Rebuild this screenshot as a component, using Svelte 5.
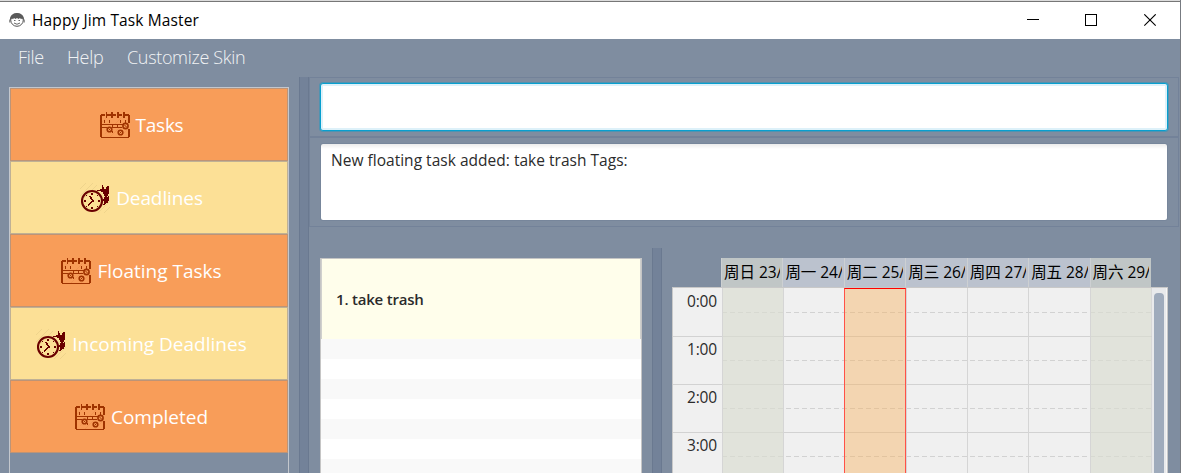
<script>
  const menus = [
    { label: 'File', w: 26 },
    { label: 'Help', w: 37 },
    { label: 'Customize Skin', w: 119 }
  ];
  const categories = [
    { label: 'Tasks', icon: 'calendar', track: -0.25 },
    { label: 'Deadlines', icon: 'clock', track: -0.1 },
    { label: 'Floating Tasks', icon: 'calendar', track: 0 },
    { label: 'Incoming Deadlines', icon: 'clock', track: 0 },
    { label: 'Completed', icon: 'calendar', track: 0 }
  ];
  const days = ['周日 23/', '周一 24/', '周二 25/', '周三 26/', '周四 27/', '周五 28/', '周六 29/'];
  const hours = ['0:00', '1:00', '2:00', '3:00'];
</script>

{#snippet calendar()}
  <svg class="icon" width="30" height="30" viewBox="0 0 30 30">
    <path d="M1 13L12 2M5 24L25 4M9 28L29 8M19 28L29 18" stroke="#ee9250" stroke-width="1" fill="none" opacity=".7" />
    <g fill="#9f3300" shape-rendering="crispEdges">
      <path d="M0 5h2v22H0zM1 4h4v2H1zM1 27h28v1H1zM28 19h2v8h-2zM28 5h2v8h-2zM25 4h4v2h-4z" />
      <path d="M6 2h1v6H6zM7 4h4v2H7zM11 2h2v6h-2zM13 4h3v2h-3zM17 2h2v6h-2zM19 4h3v2h-3zM23 2h2v6h-2z" />
      <path d="M4 10h1v3H4zM9 10h1v3H9zM20 10h1v3h-1zM25 10h1v3h-1zM2 14h21v1H2zM2 17h5v1H2zM12 17h10v1H12zM12 14h1v3h-1zM17 14h1v4h-1zM12 21h1v2h-1z" />
    </g>
    <g fill="none" stroke="#9f3300" stroke-width="1.6">
      <circle cx="9.500" cy="19.500" r="2.300" />
      <circle cx="20.500" cy="22.500" r="2.300" />
      <circle cx="25.500" cy="16" r="2.600" />
      <path d="M8.500 18.500l2 2M19.500 23.500l2-2M24.500 15.500l2 1" stroke-width="1" />
    </g>
  </svg>
{/snippet}

{#snippet clock()}
  <svg class="icon" width="30" height="30" viewBox="0 0 30 30">
    <path d="M0 6L6 0M0 13L13 0M3 16L17 2M18 30L30 18M24 30L30 24" stroke="#efd48c" stroke-width="1" fill="none" />
    <circle cx="12" cy="18" r="10" fill="none" stroke="#690000" stroke-width="2.1" />
    <g shape-rendering="crispEdges">
      <path d="M10 13l3 5-5 4" fill="none" stroke="#690000" stroke-width="1.700" />
      <path fill="#690000" d="M11 10h2v2h-2zM4 17h2v2H4zM18 17h2v2h-2zM11 24h2v2h-2zM6 12h1v1H6zM17 12h1v1h-1zM6 23h1v1H6zM17 23h1v1h-1z" />
      <path fill="#690000" d="M17 7h3v-1h2v-4h1v2h1v2h2v-2h1v-1h2v8h-1v2h-1v1h1v-1h1v5h-1v2h-2v1h-1v1h-2v-1h1v-3h-1v-2h1v-2h1v-1h-1v-2h-1v-2h-2v-1h-4z" />
    </g>
  </svg>
{/snippet}

<div class="window">
  <header class="titlebar">
    <svg class="logo" width="16" height="16" viewBox="0 0 16 16">
      <circle cx="8" cy="8" r="6.3" fill="#fff" stroke="#555" stroke-width="1" />
      <path d="M1 8C.8 4 3.500 1 8 1s7.200 3 7 7l-2-1.500-1 .8-1-1.300-1.500 1L8 6 6.500 7 5 6 4 7.300l-1-.8z" fill="#5a5a5a" />
      <path d="M.8 7.500v3M15.200 7.500v3M5 8.500h1.500M9.500 8.500H11M5 11q3 2.500 6 0" stroke="#666" stroke-width="1" fill="none" />
    </svg>
    <span class="title">Happy Jim Task Master</span>
    <svg class="controls" width="132" height="13" viewBox="0 0 132 13" fill="none" stroke="#000">
      <path d="M0 5.500h12" />
      <rect x="58.500" y=".5" width="11" height="11" />
      <path d="M117.300.3l11.400 11.400M128.700.3L117.300 11.700" stroke-width="1.100" />
    </svg>
  </header>

  <nav class="menubar">
    {#each menus as m}
      <span class="menu" style="width:{m.w}px">{m.label}</span>
    {/each}
  </nav>

  <main class="content">
    <aside class="sidebar">
      {#each categories as c}
        <div class="category" class:alt={c.icon === 'clock'}>
          {#if c.icon === 'clock'}{@render clock()}{:else}{@render calendar()}{/if}
          <span style="letter-spacing:{c.track}px">{c.label}</span>
        </div>
      {/each}
    </aside>
    <div class="divider"></div>
    <section class="right">
      <div class="panel command"><div class="input"></div></div>
      <div class="panel result"><div class="textarea"><span>New floating task added: take trash Tags:</span></div></div>
      <div class="lower">
        <div class="tasklist">
          <div class="task">1. take trash</div>
          <div class="stripes"></div>
        </div>
        <div class="divider"></div>
        <div class="agenda">
          <div class="days">
            {#each days as d, i}
              <div class="day" class:weekend={i === 0 || i === 6}><span>{d}</span></div>
            {/each}
          </div>
          <div class="body">
            <div class="hours">
              {#each hours as h}<div class="hour">{h}</div>{/each}
            </div>
            <div class="grid">
              <svg class="lines" width="430" height="185" viewBox="0 0 430 185" fill="none" stroke="#d2d2d2">
                {#each hours as h, i}
                  <path d="M0 {48 * i + 24.5}H430" stroke-dasharray="5 3" />
                  <path d="M0 {48 * i + 48.5}H430" />
                {/each}
              </svg>
              {#each days as d, i}
                <div class="col" class:weekend={i === 0 || i === 6} class:today={i === 2}></div>
              {/each}
            </div>
            <div class="scroll"><div class="thumb"></div></div>
          </div>
        </div>
      </div>
    </section>
  </main>
</div>

<style>
  :global(body) { overflow: hidden; }
  .window {
    box-sizing: border-box; width: 1181px; height: 473px; overflow: hidden;
    display: flex; flex-direction: column; background: #7f8da0;
    border-right: 1px solid #777b81;
    font-family: "Open Sans", "Noto Sans", "Noto Sans CJK SC", sans-serif;
  }
  .titlebar {
    box-sizing: border-box; height: 39px; flex: none; display: flex; align-items: center;
    background: #fff; border-top: 1px solid #dcdcdc; box-shadow: inset 0 1px #777;
    padding: 0 21px 0 9px;
  }
  .title { margin-left: 7px; font-size: 15.500px; letter-spacing: 0.12px; color: #000; white-space: nowrap; }
  .controls { margin-left: auto; }
  .menubar { height: 38px; flex: none; display: flex; gap: 23px; padding-left: 18px; }
  .menu { line-height: 37px; font-size: 18px; font-weight: 300; letter-spacing: -0.33px; color: #f1f3f5; white-space: nowrap; }
  .content { flex: 1; min-height: 0; display: flex; }
  .sidebar {
    box-sizing: border-box; width: 280px; margin: 10px 10px 0 9px; flex: none;
    border: 1px solid #c3c7cd; border-bottom: 0;
  }
  .category {
    box-sizing: border-box; height: 73px; display: flex; align-items: center; justify-content: center;
    gap: 6px; padding-right: 15px; background: #f89d59; border: 1px solid #bd9477;
    color: #fff; font-size: 19px; font-weight: 370; white-space: nowrap;
  }
  .category.alt { background: #fce096; border-color: #bfb195; }
  .icon { flex: none; }
  .divider { box-sizing: border-box; width: 10px; flex: none; background: #738299; border: solid #6a7990; border-width: 0 1px; }
  .right { width: 870px; flex: none; display: flex; flex-direction: column; min-height: 0; }
  .panel { box-sizing: border-box; flex: none; border: 1px solid #738299; }
  .command { height: 60px; padding: 5px 10px; }
  .input {
    box-sizing: border-box; height: 48px; border: 1px solid #079fcf; border-radius: 3px; background: #fff;
    box-shadow: inset 0 0 0 2px #def1f9, 0 0 0 1px #2f98bd99;
  }
  .result { height: 90px; padding: 5px 10px; }
  .textarea {
    box-sizing: border-box; height: 78px; border: 1px solid #77869b; border-radius: 3px; padding: 5px 10px;
    background: linear-gradient(#ebebeb, #fff 5px); color: #2b2b2b; font-size: 15.500px; line-height: 22px; letter-spacing: 0.02px;
  }
  .lower { flex: 1; min-height: 0; display: flex; padding-top: 21px; }
  .tasklist {
    box-sizing: border-box; width: 322px; margin: 10px 10px 0 11px; flex: none; display: flex; flex-direction: column;
    border: 1px solid #c5c5c5; border-bottom: 0;
  }
  .task {
    box-sizing: border-box; height: 80px; flex: none; padding-left: 14px; line-height: 81px;
    background: #fffeeb; border: solid #d0d0cd; border-width: 0 1px;
    font-size: 15px; font-weight: 600; letter-spacing: -0.2px; color: #2b2b2b;
  }
  .stripes { flex: 1; background: repeating-linear-gradient(#f9f9f9 0 20px, #fff 20px 40px); }
  .agenda { width: 496px; margin: 10px 0 0 10px; display: flex; flex-direction: column; }
  .days { height: 29px; flex: none; margin: 0 17px 0 49px; display: grid; grid-template-columns: repeat(7, 1fr); }
  .day {
    box-sizing: border-box; border-left: 1px solid #cdd0d2; padding: 0 2px; background: #bbc2ce;
    color: #000; font-size: 15.500px; line-height: 28px; min-width: 0;
    font-family: "Open Sans", "Noto Sans CJK SC", sans-serif; letter-spacing: -0.05px;
  }
  .day span { display: block; overflow: hidden; white-space: nowrap; }
  .day.weekend { background: #c0c6c6; }
  .body {
    box-sizing: border-box; flex: 1; min-height: 0; display: flex; background: #f0f0f0;
    border: 1px solid #c8c8c8; border-bottom: 0; overflow: hidden;
  }
  .hours { width: 49px; flex: none; }
  .hour {
    box-sizing: border-box; height: 48px; border-bottom: 1px solid #d2d2d2; padding: 1px 5px 0 0;
    text-align: right; font-size: 15.500px; line-height: 22px; letter-spacing: -0.15px; color: #2b2b2b;
  }
  .hour:first-child { height: 49px; padding-top: 2px; }
  .grid { position: relative; width: 429px; flex: none; display: grid; grid-template-columns: repeat(7, 1fr); }
  .lines { position: absolute; left: 0; top: 0; }
  .col { position: relative; border-left: 1px solid #d5d5d5; }
  .col.weekend { background: #d9ddd0aa; }
  .col.today { background: #f9b25f6e; border: 1px solid #ff5148; border-top-color: #f00; border-bottom: 0; margin: 0 0 0 -1px; z-index: 1; }
  .scroll { box-sizing: border-box; flex: 1; padding: 5px 3px 0 2px; border-left: 1px solid #d8d8d8; background: #e9eaec; box-shadow: inset -1px 0 #f6f6f6; }
  .thumb { width: 10px; height: 300px; border-radius: 4px; background: #9fabbc; }
</style>
